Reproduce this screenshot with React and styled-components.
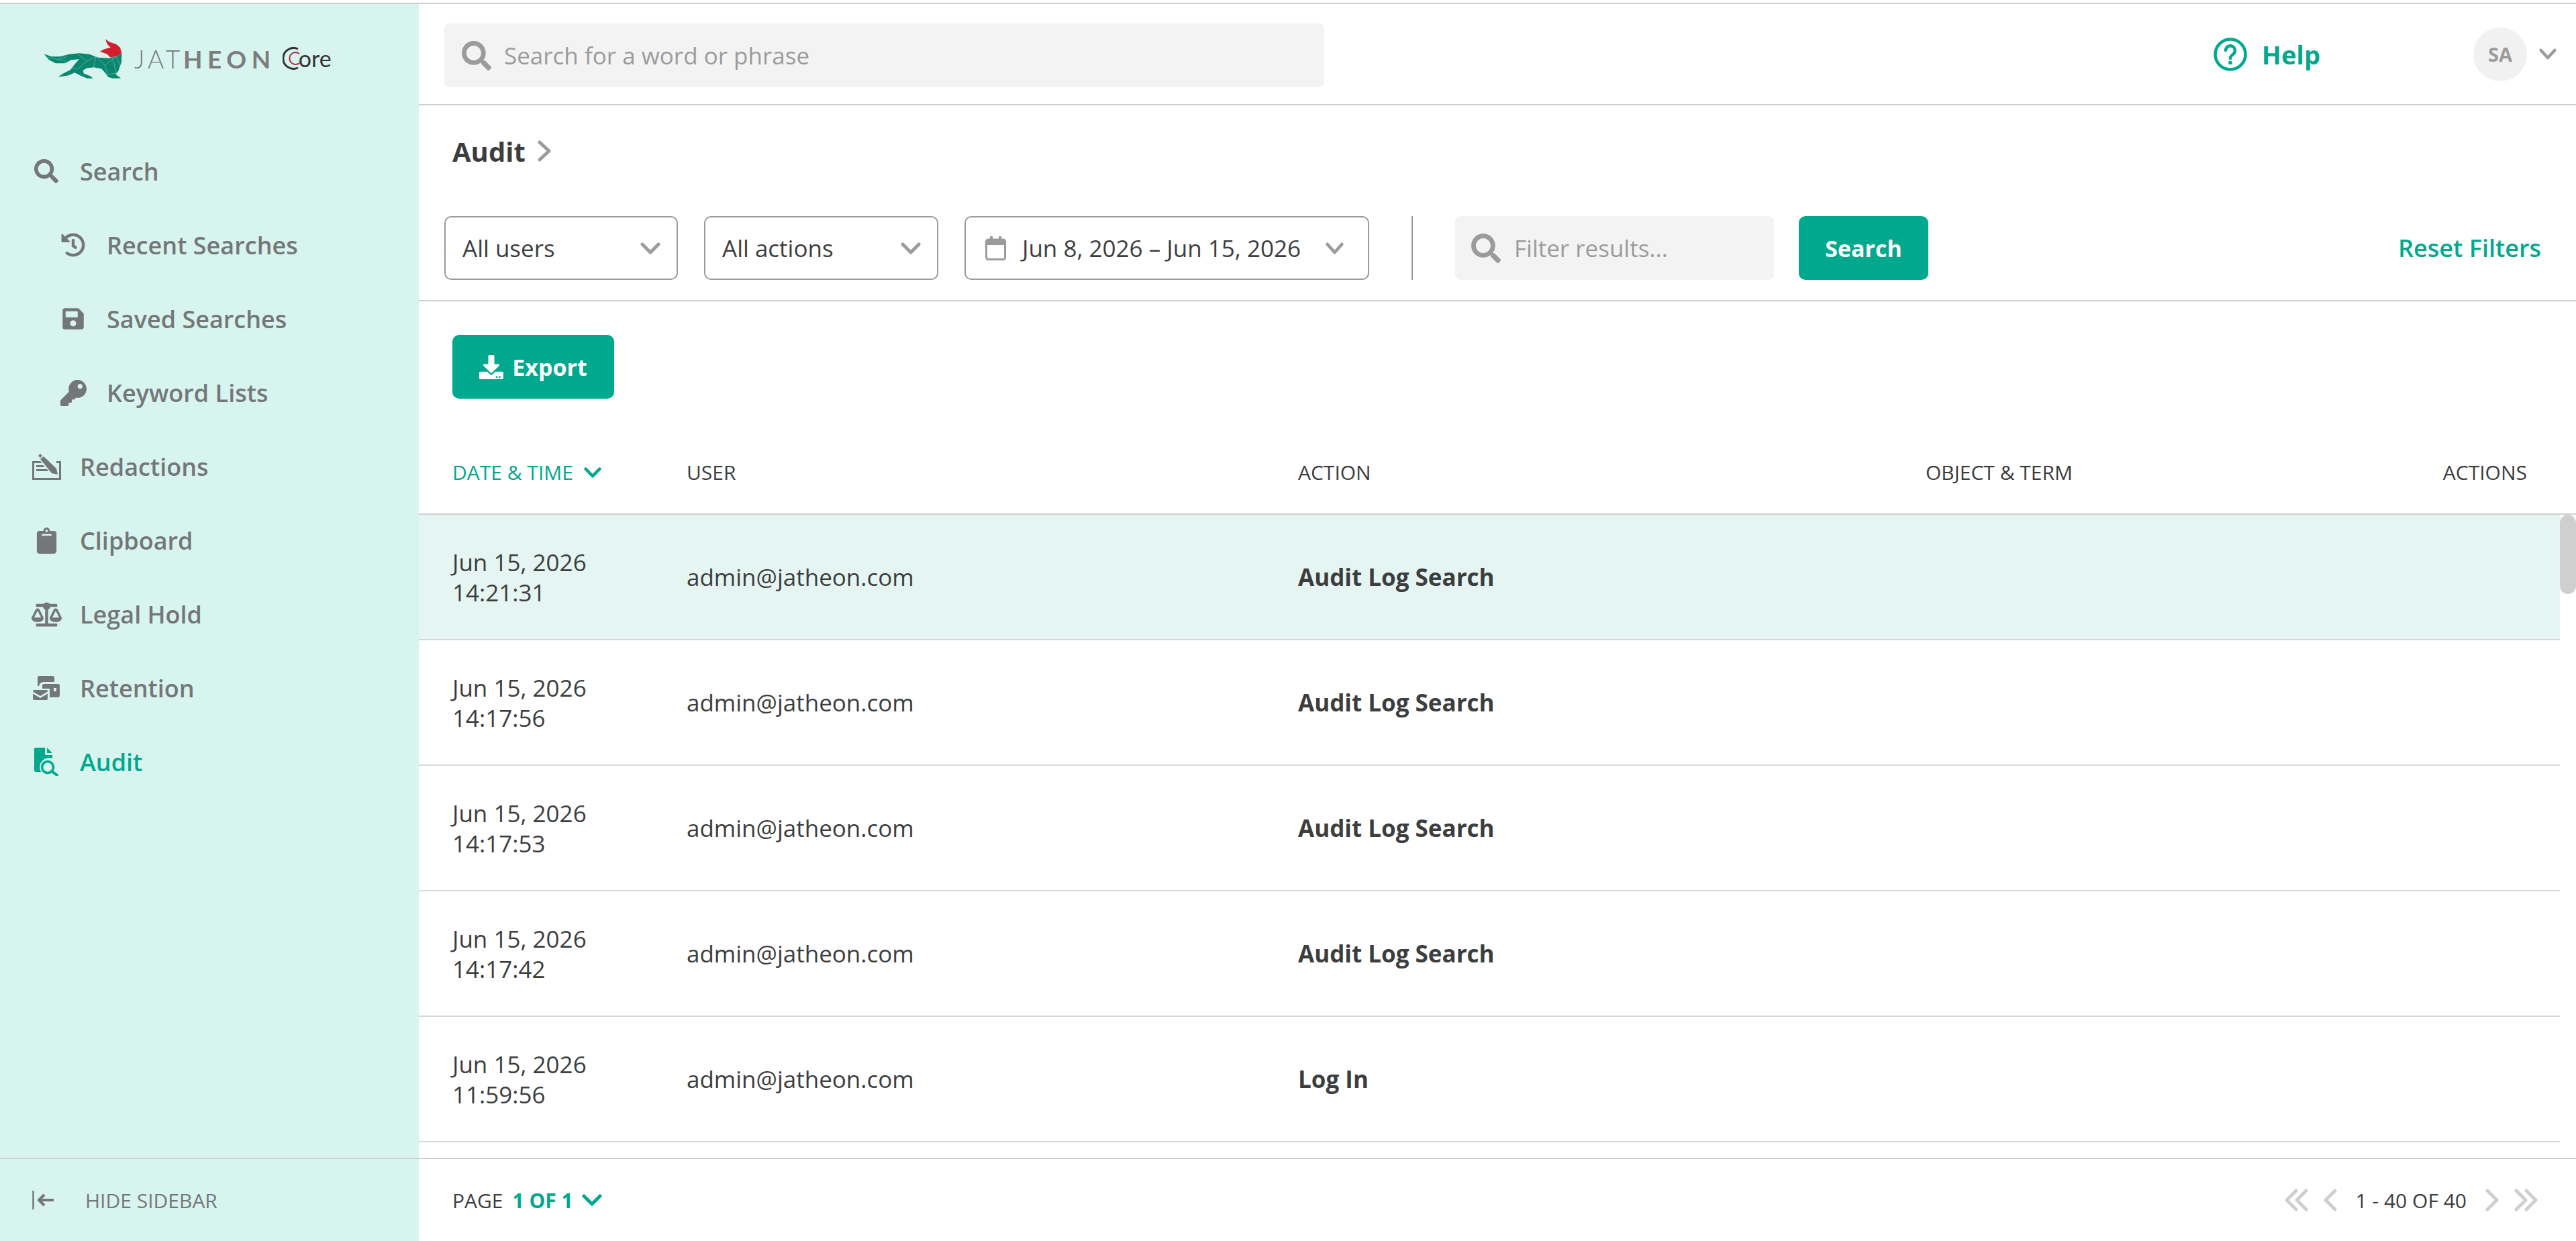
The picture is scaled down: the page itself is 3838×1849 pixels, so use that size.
import React from "react";
import styled, { createGlobalStyle } from "styled-components";
import { FaSearch, FaHistory, FaSave, FaKey, FaClipboard, FaBalanceScale, FaDownload } from "react-icons/fa";

const TEAL = "#00a88d";
const GREY = "#747777";
const DARK = "#3c3e3e";
const LINE = "#cfcfcf";
const MUTED = "#9b9b9b";

const Global = createGlobalStyle`
  html, body { margin: 0; padding: 0; background: #fff; }
  body { font-family: "Open Sans", "Liberation Sans", sans-serif; color: ${DARK}; padding-top: 4px; }
  * { box-sizing: border-box; }
`;

const Shell = styled.div`
  display: flex;
  height: 1845px;
  border-top: 2px solid ${LINE};
  overflow: hidden;
`;
const Sidebar = styled.aside`
  width: 624px;
  flex: none;
  display: flex;
  flex-direction: column;
  background: #d8f4ef;
`;
const LogoRow = styled.div`
  height: 151px;
  display: flex;
  align-items: center;
  padding: 11px 0 0 63px;
  flex: none;
`;
const LogoWord = styled.span`
  font-family: Lato, "Liberation Sans", sans-serif;
  font-size: 37px;
  font-weight: 300;
  letter-spacing: 5px;
  color: ${GREY};
  margin-left: 17px;
  line-height: 1;
`;
const LogoStrong = styled.span`
  font-weight: 700;
  letter-spacing: 7.5px;
  color: #7b7e7e;
`;
const CoreMark = styled.span`
  display: inline-flex;
  align-items: center;
  margin-left: 10px;
  font-family: Lato, "Liberation Sans", sans-serif;
  font-size: 34px;
  color: #333;
  line-height: 1;
`;
const CoreArc = styled.svg`
  width: 27px;
  height: 36px;
  margin-right: -3px;
`;
const Nav = styled.nav`
  flex: 1;
  padding-top: 43px;
`;
const NavItem = styled.div`
  height: 110px;
  display: flex;
  align-items: center;
  padding-left: ${(p) => (p.$sub ? 86 : 46)}px;
  font-size: 36px;
  font-weight: 600;
  color: ${(p) => (p.$active ? TEAL : GREY)};
`;
const NavIcon = styled.span`
  width: 46px;
  flex: none;
  display: flex;
  justify-content: center;
  align-items: center;
  margin-right: 27px;
`;
const SideFoot = styled.div`
  height: 124px;
  flex: none;
  border-top: 2px solid ${LINE};
  display: flex;
  align-items: center;
  padding-left: 48px;
  gap: 47px;
  font-size: 30px;
  color: ${GREY};
`;
const Main = styled.main`
  flex: 1;
  min-width: 0;
  display: flex;
  flex-direction: column;
`;
const TopBar = styled.header`
  height: 151px;
  flex: none;
  display: flex;
  align-items: center;
  border-bottom: 2px solid ${LINE};
  padding-left: 38px;
`;
const SearchField = styled.div`
  width: ${(p) => p.$w}px;
  height: 95px;
  flex: none;
  display: flex;
  align-items: center;
  background: #f3f3f3;
  border-radius: 8px;
  padding-left: ${(p) => p.$pad}px;
  gap: ${(p) => p.$gap}px;
  font-size: 35px;
  color: ${MUTED};
`;
const GlobalSearch = styled(SearchField)`
  margin-top: 4px;
`;
const HelpLink = styled.div`
  margin-left: auto;
  display: flex;
  align-items: center;
  gap: 22px;
  font-size: 38px;
  font-weight: 700;
  color: ${TEAL};
  margin-right: 228px;
`;
const Avatar = styled.div`
  width: 80px;
  height: 80px;
  border-radius: 50%;
  background: #f1f1f1;
  display: flex;
  align-items: center;
  justify-content: center;
  font-size: 29px;
  font-weight: 700;
  color: ${MUTED};
`;
const AvatarWrap = styled.div`
  display: flex;
  align-items: center;
  gap: 18px;
  padding-right: 29px;
`;
const Toolbar = styled.section`
  flex: none;
  border-bottom: 2px solid ${LINE};
  padding-bottom: 30px;
`;
const Crumb = styled.div`
  height: 136px;
  margin-bottom: 29px;
  padding: 0 0 0 50px;
  display: flex;
  align-items: center;
  gap: 18px;
  font-size: 40px;
  font-weight: 700;
  color: ${DARK};
`;
const FilterRow = styled.div`
  height: 95px;
  display: flex;
  align-items: stretch;
  padding: 0 52px 0 38px;
`;
const Select = styled.div`
  width: ${(p) => p.$w}px;
  flex: none;
  margin-right: ${(p) => p.$mr}px;
  border: 2px solid ${MUTED};
  border-radius: 10px;
  display: flex;
  align-items: center;
  padding: 0 ${(p) => p.$pr || 24}px 0 ${(p) => p.$pl || 25}px;
  font-size: 35px;
  color: ${DARK};
  justify-content: space-between;
`;
const DateValue = styled.span`
  display: flex;
  align-items: center;
  gap: 24px;
  white-space: nowrap;
`;
const Divider = styled.div`
  width: 2px;
  flex: none;
  background: ${MUTED};
  margin-right: 63px;
`;
const PrimaryButton = styled.button`
  width: ${(p) => p.$w}px;
  height: 95px;
  flex: none;
  margin-left: ${(p) => p.$ml || 0}px;
  border: 0;
  border-radius: 10px;
  background: ${TEAL};
  color: #fff;
  font: 700 34px "Open Sans", "Liberation Sans", sans-serif;
  display: flex;
  align-items: center;
  justify-content: center;
  gap: 13px;
  padding: 0;
`;
const ResetLink = styled.div`
  margin-left: auto;
  align-self: center;
  font-size: 36px;
  font-weight: 600;
  color: ${TEAL};
`;
const ExportRow = styled.div`
  flex: none;
  padding: 50px 0 0 50px;
`;
const Grid = styled.div`
  display: grid;
  grid-template-columns: 349px 911px 935px 1fr auto;
  align-items: center;
  padding-left: 50px;
`;
const HeadRow = styled(Grid)`
  flex: none;
  height: 173px;
  padding-top: 48px;
  padding-right: 73px;
  border-bottom: 2px solid ${LINE};
  font-size: 30px;
  color: ${DARK};
`;
const HeadCell = styled.div`
  display: flex;
  align-items: center;
  gap: 16px;
  color: ${(p) => (p.$active ? TEAL : DARK)};
`;
const RowsView = styled.div`
  flex: 1;
  min-height: 0;
  position: relative;
  overflow: hidden;
  padding-right: 24px;
`;
const Thumb = styled.div`
  position: absolute;
  top: 0;
  right: 0;
  width: 24px;
  height: 118px;
  border-radius: 12px;
  background: ${LINE};
`;
const Row = styled(Grid)`
  height: 187px;
  border-bottom: 2px solid #d5d9d8;
  background: ${(p) => (p.$selected ? "#e5f5f1" : "#fff")};
  font-size: 35px;
  color: ${DARK};
`;
const DateCell = styled.div`
  line-height: 45px;
`;
const ActionCell = styled.div`
  font-weight: 700;
`;
const Footer = styled.footer`
  height: 124px;
  flex: none;
  border-top: 2px solid ${LINE};
  display: flex;
  align-items: center;
  justify-content: space-between;
  padding: 0 57px 0 50px;
  font-size: 30px;
  color: ${DARK};
`;
const PageInfo = styled.div`
  display: flex;
  align-items: center;
`;
const PageCurrent = styled.span`
  font-weight: 700;
  color: ${TEAL};
  margin: 0 13px 0 14px;
`;
const Pager = styled.div`
  display: flex;
  align-items: center;
  gap: 23px;
`;
const PagerText = styled.span`
  margin: 0 5px;
`;

const Chevron = ({ c = MUTED, w = 30, h = 18, sw = 5 }) => (
  <svg width={w} height={h} viewBox="0 0 30 18" preserveAspectRatio="none" fill="none" stroke={c} strokeWidth={sw} strokeLinecap="round" strokeLinejoin="round">
    <path d="M3 3l12 12L27 3" />
  </svg>
);
const PagerChevron = ({ left, double }) => (
  <svg width={double ? 35 : 20} height="34" viewBox={double ? "0 0 35 34" : "0 0 20 34"} fill="none" stroke={LINE} strokeWidth="5" strokeLinecap="round" strokeLinejoin="round" transform={left ? "scale(-1 1)" : undefined}>
    <path d="M3 3l14 14L3 31" />
    {double && <path d="M18 3l14 14L18 31" />}
  </svg>
);
const RedactIcon = () => (
  <svg width="45" height="40" viewBox="0 0 45 40" fill={GREY}>
    <path d="M1 12h12l3 3H4v22h37V15h-4V12h7v28H1z" />
    <path d="M10 4l3-3 3 3-3 3zM13 9l5-4 19 18 2 9-9-2z" />
    <path d="M7 18h10l3 3H7zM7 24h16l3 3H7z" />
  </svg>
);
const RetentionIcon = () => (
  <svg width="40" height="36" viewBox="0 0 40 36" fill={GREY}>
    <path d="M10 0h19a3 3 0 0 1 3 3v6H16a8 8 0 0 0-7 6H7V3a3 3 0 0 1 3-3z" />
    <path d="M17 12h20a3 3 0 0 1 3 3v14a3 3 0 0 1-3 3H25V19h-11v-4a3 3 0 0 1 3-3z" />
    <rect x="31" y="18" width="4" height="5" fill="#d8f4ef" />
    <path d="M2 21h18a2 2 0 0 1 2 2v.5L11 30 0 23.500V23a2 2 0 0 1 2-2zM0 26.500l11 6.500 11-6.500V34a2 2 0 0 1-2 2H2a2 2 0 0 1-2-2z" />
  </svg>
);
const AuditIcon = () => (
  <svg width="36" height="42" viewBox="0 0 36 42" fill={TEAL}>
    <path d="M2 0h14v11h11v5a14 14 0 0 0-17 20H2a2 2 0 0 1-2-2V2a2 2 0 0 1 2-2zM19 0l8 8h-8z" />
    <circle cx="20" cy="29" r="8.500" fill="none" stroke={TEAL} strokeWidth="3.500" />
    <path d="M26 35l8 6" stroke={TEAL} strokeWidth="4" strokeLinecap="round" />
  </svg>
);
const HelpIcon = () => (
  <svg width="50" height="50" viewBox="0 0 50 50" fill="none" stroke={TEAL}>
    <circle cx="25" cy="25" r="22.500" strokeWidth="4.500" />
    <path d="M18 19a7 7 0 1 1 11 6c-2.500 1.700-4 3-4 6" strokeWidth="4.500" strokeLinecap="round" />
    <circle cx="25" cy="37.500" r="2.800" fill={TEAL} stroke="none" />
  </svg>
);
const CalendarIcon = () => (
  <svg width="31" height="36" viewBox="0 0 31 36" fill="none" stroke={MUTED}>
    <rect x="1.500" y="5" width="28" height="29.500" rx="3" strokeWidth="3" />
    <path d="M1.500 9h28" strokeWidth="8" />
    <path d="M9 0v6M22 0v6" strokeWidth="4" />
  </svg>
);
const HideIcon = () => (
  <svg width="32" height="28" viewBox="0 0 32 28" fill="none" stroke={GREY}>
    <path d="M1.500 0v28" strokeWidth="2.500" />
    <path d="M32 14H11M18 6l-8 8 8 8" strokeWidth="4" />
  </svg>
);
const FoxLogo = () => (
  <svg width="120" height="67" viewBox="70 70 360 200">
    <path fill="#0b8770" d="M78 148L110 160L150 160L190 150L235 145L280 150L320 165L370 168L405 158L425 145L424 185L410 225L398 240L422 258L385 258L365 252L350 232L335 215L300 208L270 212L252 222L255 235L285 248L297 258L270 258L240 245L215 232L185 245L140 252L165 235L195 220L215 195L235 172L200 175L170 190L130 190L100 175Z" />
    <path fill="none" stroke="#d8f4ef" strokeOpacity=".5" strokeWidth="2" d="M95 165l45 8 40-12M140 173l35 8M230 150l40 30 40-20 40 40 50-40 20 45M270 180l-35 30M310 160l-10 45M350 200l12 40 40-5M385 165l15 70M200 210l35 5" />
    <path fill="#d31f2e" d="M352 82L370 95L400 105L418 120L425 145L405 158L375 165L360 150L328 138L345 128L375 120L360 105Z" />
  </svg>
);

const rows = [
  { time: "14:21:31", action: "Audit Log Search", selected: true },
  { time: "14:17:56", action: "Audit Log Search" },
  { time: "14:17:53", action: "Audit Log Search" },
  { time: "14:17:42", action: "Audit Log Search" },
  { time: "11:59:56", action: "Log In" },
];

const nav = [
  { label: "Search", icon: <FaSearch size={36} /> },
  { label: "Recent Searches", sub: true, icon: <FaHistory size={36} /> },
  { label: "Saved Searches", sub: true, icon: <FaSave size={36} /> },
  { label: "Keyword Lists", sub: true, icon: <FaKey size={39} /> },
  { label: "Redactions", icon: <RedactIcon /> },
  { label: "Clipboard", icon: <FaClipboard size={39} /> },
  { label: "Legal Hold", icon: <FaBalanceScale size={45} /> },
  { label: "Retention", icon: <RetentionIcon /> },
  { label: "Audit", active: true, icon: <AuditIcon /> },
];

export default function App() {
  return (
    <>
      <Global />
      <Shell>
        <Sidebar>
          <LogoRow>
            <FoxLogo />
            <LogoWord>JAT<LogoStrong>HEON</LogoStrong></LogoWord>
            <CoreMark>
              <CoreArc viewBox="0 0 27 36" fill="none">
                <path d="M23 4A15.500 15.500 0 1 0 23 32" stroke="#333" strokeWidth="3" />
                <path d="M25 11A9 9 0 1 0 25 25" stroke="#b02a3a" strokeWidth="2" />
              </CoreArc>
              ore
            </CoreMark>
          </LogoRow>
          <Nav>
            {nav.map((n) => (
              <NavItem key={n.label} $sub={n.sub} $active={n.active}>
                <NavIcon>{n.icon}</NavIcon>
                {n.label}
              </NavItem>
            ))}
          </Nav>
          <SideFoot>
            <HideIcon />
            HIDE SIDEBAR
          </SideFoot>
        </Sidebar>
        <Main>
          <TopBar>
            <GlobalSearch $w={1311} $pad={26} $gap={19}>
              <FaSearch size={44} color={MUTED} />
              Search for a word or phrase
            </GlobalSearch>
            <HelpLink>
              <HelpIcon />
              Help
            </HelpLink>
            <AvatarWrap>
              <Avatar>SA</Avatar>
              <Chevron w={26} h={17} />
            </AvatarWrap>
          </TopBar>
          <Toolbar>
            <Crumb>
              Audit
              <svg width="21" height="32" viewBox="0 0 21 32" fill="none" stroke={MUTED} strokeWidth="5" strokeLinecap="round" strokeLinejoin="round">
                <path d="M3 3l14 13L3 29" />
              </svg>
            </Crumb>
            <FilterRow>
              <Select $w={348} $mr={39}>All users<Chevron /></Select>
              <Select $w={349} $mr={39}>All actions<Chevron /></Select>
              <Select $w={603} $mr={63} $pr={36} $pl={29}>
                <DateValue><CalendarIcon />Jun 8, 2026 – Jun 15, 2026</DateValue>
                <Chevron w={27} />
              </Select>
              <Divider />
              <SearchField $w={475} $pad={24} $gap={20}>
                <FaSearch size={44} color={MUTED} />
                Filter results...
              </SearchField>
              <PrimaryButton $w={193} $ml={37}>Search</PrimaryButton>
              <ResetLink>Reset Filters</ResetLink>
            </FilterRow>
          </Toolbar>
          <ExportRow>
            <PrimaryButton $w={241}><FaDownload size={36} />Export</PrimaryButton>
          </ExportRow>
          <HeadRow>
            <HeadCell $active>DATE &amp; TIME<Chevron c={TEAL} w={26} h={16} /></HeadCell>
            <HeadCell>USER</HeadCell>
            <HeadCell>ACTION</HeadCell>
            <HeadCell>OBJECT &amp; TERM</HeadCell>
            <HeadCell>ACTIONS</HeadCell>
          </HeadRow>
          <RowsView>
            {rows.map((r) => (
              <Row key={r.time} $selected={r.selected}>
                <DateCell>Jun 15, 2026<br />{r.time}</DateCell>
                <div>admin@jatheon.com</div>
                <ActionCell>{r.action}</ActionCell>
              </Row>
            ))}
            <Thumb />
          </RowsView>
          <Footer>
            <PageInfo>
              PAGE<PageCurrent>1 OF 1</PageCurrent><Chevron c={TEAL} w={30} h={18} />
            </PageInfo>
            <Pager>
              <PagerChevron left double />
              <PagerChevron left />
              <PagerText>1 - 40 OF 40</PagerText>
              <PagerChevron />
              <PagerChevron double />
            </Pager>
          </Footer>
        </Main>
      </Shell>
    </>
  );
}
